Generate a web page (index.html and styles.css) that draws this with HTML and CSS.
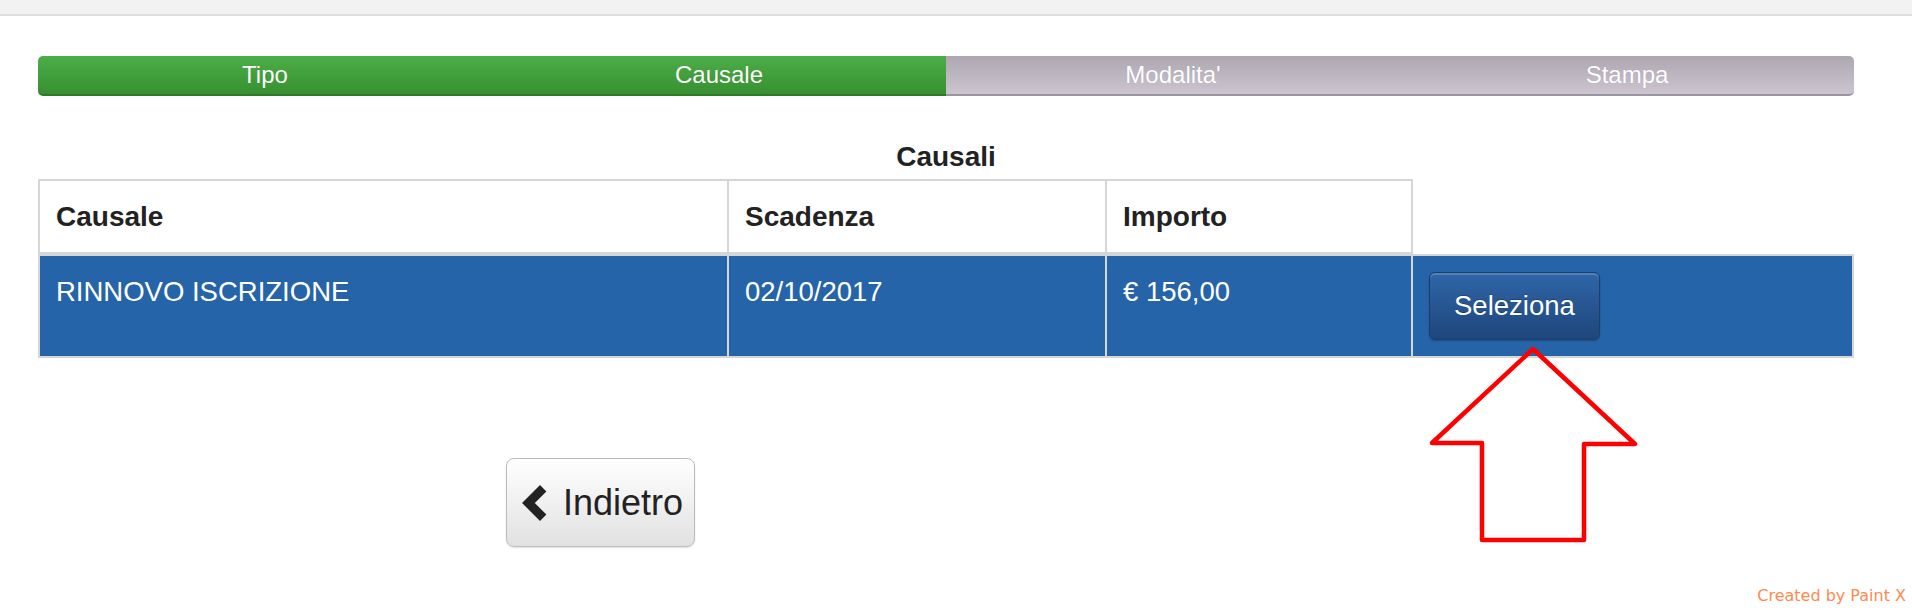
FILE: index.html
```html
<!DOCTYPE html>
<html lang="it">
<head>
<meta charset="utf-8">
<title>Causali</title>
<link rel="stylesheet" href="styles.css">
</head>
<body>
<div class="topbar"></div>
<main class="page">
  <div class="steps">
    <div class="step done first">Tipo</div>
    <div class="step done">Causale</div>
    <div class="step todo">Modalita'</div>
    <div class="step todo last">Stampa</div>
  </div>

  <table class="grid">
    <caption>Causali</caption>
    <colgroup>
      <col class="c1"><col class="c2"><col class="c3"><col class="c4">
    </colgroup>
    <thead>
      <tr>
        <th>Causale</th>
        <th>Scadenza</th>
        <th>Importo</th>
        <th class="blank"></th>
      </tr>
    </thead>
    <tbody>
      <tr class="selected">
        <td>RINNOVO ISCRIZIONE</td>
        <td>02/10/2017</td>
        <td>€ 156,00</td>
        <td class="last"><button class="btn-select" type="button">Seleziona</button></td>
      </tr>
    </tbody>
  </table>

  <div class="actions">
    <button class="btn-back" type="button">
      <svg class="chev" width="25" height="36" viewBox="0 0 25 36" aria-hidden="true">
        <polyline points="21.2,3.2 6.4,18 21.2,32.8" fill="none" stroke="#222" stroke-width="9" stroke-linejoin="miter" stroke-linecap="butt"/>
      </svg>
      <span>Indietro</span>
    </button>
  </div>
</main>

<svg class="annot-arrow" width="230" height="210" viewBox="0 0 230 210" aria-hidden="true">
  <polygon points="113,9 215,104 164,104 164,200 62,200 62,103 12,103" fill="none" stroke="#ff0000" stroke-width="4.5" stroke-linejoin="round"/>
</svg>

<div class="watermark">Created by Paint X</div>
</body>
</html>
```

FILE: styles.css
```css
html, body {
  margin: 0;
  padding: 0;
  background: #ffffff;
}

body {
  font-family: "Liberation Sans", Arial, Helvetica, sans-serif;
  color: #222222;
  position: relative;
  height: 610px;
  overflow: hidden;
}

.topbar {
  height: 14px;
  background: #f2f2f2;
  border-bottom: 2px solid #dedede;
}

.page {
  width: 1816px;
  padding: 40px 0 0 38px;
}

/* progress steps */
.steps {
  display: flex;
  height: 40px;
  margin-bottom: 41px;
}

.step {
  flex: 1 1 0;
  display: flex;
  align-items: center;
  justify-content: center;
  color: #ffffff;
  font-size: 24px;
  line-height: 38px;
  text-shadow: 0 0 1px rgba(0, 0, 0, 0.15);
}

.step.done {
  background: linear-gradient(#4cae48, #379030);
  border-bottom: 2px solid #2e7a28;
}

.step.todo {
  background: linear-gradient(#aea6b1, #ccc5d0);
  border-bottom: 2px solid #9b97a1;
}

.step.first {
  border-radius: 5px 0 0 5px;
}

.step.last {
  border-radius: 0 5px 5px 0;
}

/* table */
.grid {
  width: 1816px;
  table-layout: fixed;
  border-collapse: separate;
  border-spacing: 0;
}

.grid caption {
  font-size: 28px;
  font-weight: bold;
  line-height: 40px;
  padding-bottom: 2px;
  color: #222222;
}

.grid .c1 { width: 689px; }
.grid .c2 { width: 378px; }
.grid .c3 { width: 306px; }
.grid .c4 { width: 443px; }

.grid th {
  text-align: left;
  font-size: 28px;
  font-weight: bold;
  line-height: 40px;
  padding: 16px 16px 15px 16px;
  border-top: 2px solid #d6d6d6;
  border-left: 2px solid #d6d6d6;
  border-bottom: 2px solid #d6d6d6;
  vertical-align: top;
  color: #222222;
}

.grid th.blank {
  border-top: 0;
  border-bottom: 0;
  padding: 0;
}

.grid td {
  font-size: 27.5px;
  line-height: 40px;
  padding: 16px;
  vertical-align: top;
  color: #ffffff;
  background: #2664aa;
  border-top: 2px solid #d6d6d6;
  border-left: 2px solid #d6d6d6;
  border-bottom: 2px solid #d6d6d6;
}

.grid td.last {
  border-right: 2px solid #d6d6d6;
}

.btn-select {
  display: block;
  height: 68px;
  padding: 0 24px;
  font-family: "Liberation Sans", Arial, Helvetica, sans-serif;
  font-size: 27.5px;
  line-height: 40px;
  color: #ffffff;
  background: linear-gradient(#2f66a8, #1e467b);
  border: 1px solid #1b3e6c;
  border-radius: 6px;
  box-shadow: inset 0 2px 0 rgba(255, 255, 255, 0.18), 0 1px 2px rgba(0, 0, 0, 0.25);
  text-shadow: 0 -1px 0 rgba(0, 0, 0, 0.25);
}

/* back button */
.actions {
  padding: 100px 0 0 468px;
}

.btn-back {
  display: flex;
  align-items: center;
  gap: 16px;
  height: 89px;
  padding: 0 11px 0 15px;
  font-family: "Liberation Sans", Arial, Helvetica, sans-serif;
  font-size: 36px;
  color: #222222;
  background: linear-gradient(#ffffff, #e1e1e1);
  border: 1px solid #bcbcbc;
  border-radius: 8px;
  box-shadow: 0 1px 2px rgba(0, 0, 0, 0.12);
}

.btn-back .chev {
  display: block;
  flex: none;
}

/* annotations */
.annot-arrow {
  position: absolute;
  left: 1420px;
  top: 340px;
}

.watermark {
  position: absolute;
  right: 6px;
  top: 588px;
  font-family: "DejaVu Sans", Verdana, sans-serif;
  font-size: 16px;
  line-height: 16px;
  color: #ff8a50;
}
```
